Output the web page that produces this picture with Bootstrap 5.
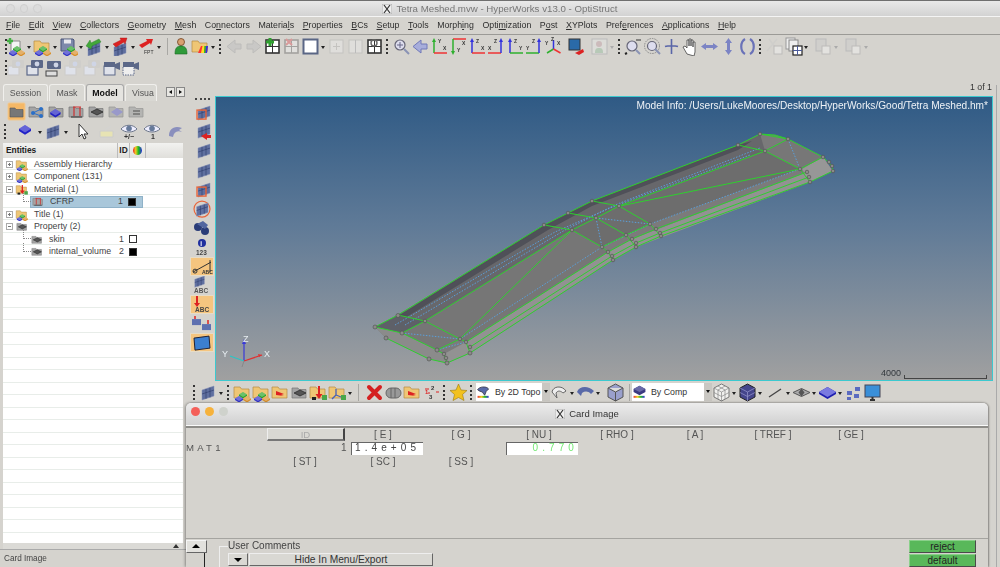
<!DOCTYPE html>
<html lang="en"><head><meta charset="utf-8"><title>HyperWorks</title>
<link href="https://cdn.jsdelivr.net/npm/bootstrap@5.3.0/dist/css/bootstrap.min.css" rel="stylesheet">
<style>
html,body{height:567px;overflow:hidden}
body{background:#d5d3ce;font-family:"Liberation Sans",Arial,sans-serif;font-size:8.8px;color:#2e2e2e;line-height:1.2;position:relative;width:1000px;filter:blur(.35px)}
.ttl{height:17px;background:linear-gradient(#e9e9e9,#d2d2d2);border-top:1px solid #6f6f6f;border-bottom:1px solid #f4f4f4;position:relative}
.ttl-t{font-size:9.7px;color:#777}
.xic{width:10px;height:10px;margin-right:4px}
.lig{width:8.5px;height:8.5px;border-radius:50%;background:#dcdcdc;border:1px solid #cfcfcf}
.menu{height:18px;border-bottom:1px solid #9b9a96;padding-left:6px;gap:8.55px;font-size:8.8px}
.tb{height:22px;padding-left:3px}
.tb2{height:21px}
.ic{width:19px;height:19px;flex:none;display:block}
.mgl2{margin-left:2px}
.grip{width:8px;height:17px;flex:none;position:relative}
.grip::after{content:"";position:absolute;left:2px;top:1px;height:15px;border-left:2px dotted #333}
.gh{display:block;height:2px;width:15px;margin:2px 0 3px 5px;border-top:2px dotted #444;flex:none}
.car{width:7px;height:19px;flex:none;position:relative}
.car::after{content:"";position:absolute;left:1px;top:9px;border:2.5px solid transparent;border-top:3px solid #222;border-bottom:0}
.car.off::after{border-top-color:#aaa}
.sepv{width:9px;height:17px;flex:none;position:relative}
.sepv::after{content:"";position:absolute;left:4px;top:0;height:17px;border-left:1px solid #a9a8a4}
.lft{width:186px;flex:none;height:489px}
.tabs{height:17px;margin-top:6px;padding-left:3px;gap:1px;border:0;position:relative}
.tabs .nav-link{padding:3px 0 0;height:17px;text-align:center;background:#d9d8d3;border:1px solid #f0efec;border-bottom:0;border-radius:3px 3px 0 0;color:#555;font-size:8.8px}
.tabs .nav-link.active{background:#e5e4e0;color:#111;font-weight:700;border-color:#aaa}
.tabs-arr{position:absolute;left:166px;top:3px;gap:1px}
.tabs-arr span{width:9px;height:10px;background:#e8e7e3;border:1px solid #888;position:relative;display:block}
.tabs-arr span::after{content:"";position:absolute;top:1.5px;left:2px;border:2.5px solid transparent}
.tabs-arr .tl::after{border-right:3px solid #111;border-left:0}
.tabs-arr .tr::after{border-left:3px solid #111;border-right:0}
.prow{height:20px;padding-left:7px;gap:1px}
.prow2{padding-left:2px;gap:0}
.tree{margin:2px 0 0 3px;width:180px;background:#fff;height:400px;position:relative}
.thd{height:15px;background:linear-gradient(#f2f2f0,#e0dfdb);font-weight:700;font-size:8.4px;color:#222;padding-left:3px}
.thd>span{border-right:1px solid #bbb;height:15px;line-height:15px}
.tbody{height:385px;background:repeating-linear-gradient(#fff 0 11.5px,#e8ede9 11.5px 12.5px)}
.trow{height:12.5px;position:relative;font-size:8.8px;color:#444}
.trin{height:12.5px;width:100%}
.lv1{padding-left:27px;width:140px}
.lv1::before{content:"";position:absolute;left:20px;top:-3px;height:9px;width:8px;border-left:1px dotted #888;border-bottom:1px dotted #888}
.trs{background:#a9c7da;border:1px solid #8fb2c8}
.exp{width:7px;height:7px;border:1px solid #aaa;margin:0 2px 0 3px;position:relative;flex:none;background:#fff}
.exp::before{content:"";position:absolute;left:1px;top:2px;width:3px;border-top:1px solid #777}
.exp.pl::after{content:"";position:absolute;left:2px;top:1px;height:3px;border-left:1px solid #777}
.tic{width:14px;height:13px;flex:none;display:block}
.nm{margin-left:5px;flex:1 1 auto;white-space:nowrap}
.idc{width:10px;text-align:right;flex:none}
.sw{width:8px;height:8px;border:1px solid #333;margin:0 6px 0 5px;flex:none;background:#000}
.sw.wh{background:#fff}
.sbar{height:6px;margin-left:3px;width:180px;background:#dbdad6;position:relative}
.sbar::after{content:"";position:absolute;left:170px;top:1px;border:3px solid transparent;border-bottom:4px solid #333;border-top:0}
.stat{height:18px;line-height:18px;padding-left:4px;border-top:1px solid #aaa;font-size:8.2px;color:#444}
.rgt{width:814px;flex:none}
.pg{height:18px;line-height:18px;text-align:right;padding-right:8px;font-size:8.8px;color:#333}
.vtb{width:29px;flex:none;padding-left:4px;height:285px}
.vbt{width:24px;height:19.2px;flex:none;display:block}
.vbt.sel2{background:#f5c57f;box-shadow:inset 0 0 0 1px #e7dcc6}
.vp{width:778px;height:285px;flex:none;position:relative;background:linear-gradient(#2f5a85,#5f7a97 45%,#a0a0a0);border:1px solid #3cc9cf}
.vp svg{position:absolute;left:0;top:0;width:100%;height:100%}
.minf{position:absolute;right:4px;top:3px;color:#eef2f6;font-size:10.14px;z-index:1}
.scb{position:absolute;right:5px;bottom:1px;color:#33383d;font-size:9px;z-index:1;gap:3px}
.scb i{display:block;width:83px;height:4px;border:1px solid #444;border-top:0}
.btb{height:22px;padding-left:5px}
.dd{height:18px;background:#fff;position:relative;flex:none;font-size:8.8px;color:#333}
.dd b{position:absolute;right:0;top:0;width:8px;height:18px;background:#c9c7c2}
.dd b::after{content:"";position:absolute;left:1.5px;top:7px;border:2.5px solid transparent;border-top:3px solid #111;border-bottom:0}
.cw{position:absolute;left:186px;top:403px;width:802px;height:164px;background:#d5d3ce;border-radius:5px 5px 0 0;box-shadow:-1px 0 3px rgba(0,0,0,.35),1px 0 2px rgba(0,0,0,.35);z-index:3}
.cwt{height:23px;border-radius:5px 5px 0 0;background:linear-gradient(#ececec,#d0d0d0);border-bottom:1px solid #fafafa;position:relative;font-size:9.5px;color:#333}
.dots{position:absolute;left:5px;top:4px;gap:5px}
.lg{width:9px;height:9px;border-radius:50%}
.cwl{border-top:2px solid #8d8c88}
.crow{height:13px;font-size:10px;color:#555;white-space:nowrap}
.cc{width:78px;text-align:center;flex:none}
.idb{width:78px;margin-left:81px;height:13px;line-height:11px;background:#d9d8d3;border:1px solid #eee;border-right:2px solid #444;border-bottom:2px solid #777;color:#aaa;padding:0;border-radius:0;font-size:9.6px}
.mt{width:155px;letter-spacing:3.2px;color:#555;font-size:9.6px}
.fld{width:72px;height:13px;background:#fff;border-top:1.5px solid #666;border-left:1.5px solid #666;flex:none;font-size:10px;letter-spacing:4.1px;line-height:10.5px;padding-left:3px;color:#444}
.fld.gr{color:#74e874;text-align:right;padding-right:0}
.cbot{position:absolute;left:0;right:0;top:135px;border-top:1px solid #a5a4a0;height:29px}
.upb{position:absolute;left:0;top:1px;width:21px;height:13px;background:#e2e1dd;border:1px solid #f5f5f5;border-right:1px solid #666;border-bottom:1px solid #666;padding:0;border-radius:0}
.upb::after{content:"";position:absolute;left:5px;top:3px;border:4px solid transparent;border-bottom:4px solid #000;border-top:0}
.upl{position:absolute;left:18px;top:14px;height:15px;border-right:1px solid #222;width:1px}
.uc{position:absolute;left:42px;top:1px;font-size:10px;color:#444}
.brk{position:absolute;left:33px;top:7px;width:9px;height:22px;border-left:1px solid #eee;border-top:1px solid #eee}
.hb{position:absolute;left:42px;top:14px;gap:1px}
.hb1,.hb2{height:13px;background:#d9d8d3;border:1px solid #eee;border-right:1px solid #666;border-bottom:1px solid #666;padding:0;border-radius:0;font-size:10.2px;line-height:11px;color:#333}
.hb1{width:20px;position:relative}
.hb1::after{content:"";position:absolute;left:5px;top:4px;border:4px solid transparent;border-top:4px solid #000;border-bottom:0}
.hb2{width:184px}
.gbtn{position:absolute;left:723px;width:67px;height:13px;padding:0;border-radius:0;background:#59b85a;border:1px solid #4a4a4a;border-top-color:#8ad08a;border-left-color:#8ad08a;color:#222;font-size:10px;line-height:11px}
.rlin{position:absolute;left:996px;top:85px;height:482px;border-left:1px solid #aaa;z-index:2}
</style></head>
<body>
<svg width="0" height="0" class="position-absolute"><defs>
<g id="dia"><path d="M0 2.5 4 0l4 2.5V4L4 6.5 0 4z"/><path d="M0 2.5 4 0l4 2.5L4 5z" fill="#fff" opacity=".3"/></g>
<path id="fld" d="M1 4h6l1.5 2H16v9H1z" fill="#efc675" stroke="#b68a42" stroke-width=".7"/>
<g id="cbs"><use href="#dia" x="6" y="8" fill="#2ca52c"/><use href="#dia" x="2" y="12" fill="#3434c8"/><use href="#dia" x="10" y="12" fill="#d8902c"/></g>
<g id="win"><rect x="3" y="3" width="13" height="13" fill="#fff" stroke="#333" stroke-width="1.6"/><path d="M9.5 3v13M3 9.5h13" stroke="#333"/></g>
<g id="wall"><path d="M3 7l12-4v10L3 17z" fill="#5f6f9f" stroke="#8a94b8" stroke-width=".5"/><path d="M7 6v10M11 4.5v10M3 11l12-4" stroke="#2d3a6a" stroke-width=".6"/></g>
<symbol id="new" viewBox="0 0 19 19"><path d="M4 4h9v12H4z" fill="#f4f4f4" stroke="#888"/><path d="M3 1v6M0 4h6" stroke="#45b045" stroke-width="2.4"/><use href="#cbs" y="1"/></symbol>
<symbol id="opn" viewBox="0 0 19 19"><use href="#fld"/><use href="#cbs" y="1"/></symbol>
<symbol id="sav" viewBox="0 0 19 19"><path d="M2 2h12l1 1v11H2z" fill="#7d89ab" stroke="#4a5578"/><rect x="5" y="2.500" width="7" height="4" fill="#e8e8ee"/><use href="#cbs" x="2" y="1"/></symbol>
<symbol id="imp" viewBox="0 0 19 19"><use href="#wall" y="2"/><path d="M1 9l5 3 1-3 9-4-2-3-8 4-1-3z" fill="#42a83a" stroke="#2a7a2a" stroke-width=".4"/></symbol>
<symbol id="exp" viewBox="0 0 19 19"><use href="#wall" y="3"/><path d="M2 7l8-4-1-2h7l-2 6-1-2-8 5z" fill="#d22" stroke="#a11" stroke-width=".4"/></symbol>
<symbol id="fpt" viewBox="0 0 19 19"><path d="M2 8l8-4-1-2h7l-2 6-1-2-8 5z" fill="#d22"/><text x="7" y="17" font-size="5" fill="#333" font-family="Liberation Sans">FPT</text></symbol>
<symbol id="usr" viewBox="0 0 19 19"><circle cx="9" cy="5" r="3.5" fill="#d8a070" stroke="#704020" stroke-width=".8"/><path d="M3 17c0-6 2-8 6-8s6 2 6 8z" fill="#2f9a3a" stroke="#1a6a22" stroke-width=".6"/></symbol>
<symbol id="rnb" viewBox="0 0 19 19"><use href="#fld"/><path d="M7 16l3-7h7l-1 7z" fill="#f33"/><path d="M10 16l1.500-7h2L13 16z" fill="#fd2"/><path d="M13 16l.5-7H15l-.5 7z" fill="#2c2"/><path d="M14.500 16l.5-7h2l-1 7z" fill="#33d"/></symbol>
<symbol id="al" viewBox="0 0 19 19"><path d="M2 9.500 10 3v4h6v5h-6v4z" fill="#c9c8c6" stroke="#bdbcba"/></symbol>
<symbol id="ar" viewBox="0 0 19 19"><path d="M17 9.500 9 3v4H3v5h6v4z" fill="#c9c8c6" stroke="#bdbcba"/></symbol>
<symbol id="gp" viewBox="0 0 19 19"><use href="#win"/><path d="M7 1v8M3 5h8" stroke="#2fa02f" stroke-width="3"/></symbol>
<symbol id="gx" viewBox="0 0 19 19"><g opacity=".3"><use href="#win"/></g><path d="M4 2l6 6M10 2 4 8" stroke="#d89a9a" stroke-width="2"/></symbol>
<symbol id="sq" viewBox="0 0 19 19"><rect x="2.500" y="2.500" width="14" height="14" fill="#fff" stroke="#5a6685" stroke-width="2"/></symbol>
<symbol id="d1" viewBox="0 0 19 19"><rect x="3" y="3" width="13" height="13" fill="#dfdedb" stroke="#c4c3c0"/><path d="M9.500 6v7M6 9.500h7" stroke="#c4c3c0"/></symbol>
<symbol id="d2" viewBox="0 0 19 19"><rect x="3" y="3" width="13" height="13" fill="#dfdedb" stroke="#c4c3c0"/><path d="M9.500 3v13" stroke="#bbb"/></symbol>
<symbol id="wt" viewBox="0 0 19 19"><use href="#win"/><circle cx="9" cy="6" r="3" fill="none" stroke="#666" stroke-width="1.400"/></symbol>
<symbol id="mag" viewBox="0 0 19 19"><circle cx="8" cy="8" r="5" fill="#dde" stroke="#667" stroke-width="1.200"/><path d="M8 5v6M5 8h6" stroke="#668"/><path d="M12 12l5 5" stroke="#8a93b5" stroke-width="2"/></symbol>
<symbol id="bl" viewBox="0 0 19 19"><path d="M2 9.500 10 3v4h6v5h-6v4z" fill="#a7addb" stroke="#7078b8"/></symbol>
<symbol id="a1" viewBox="0 0 19 19"><path d="M4 16V3" stroke="#2eb02e" stroke-width="1.500"/><path d="M4 1 2 5h4z" fill="#2eb02e"/><path d="M4 16h13" stroke="#e33" stroke-width="1.500"/><text x="8" y="6" font-size="5" font-weight="700" fill="#333">Y</text><text x="13" y="13" font-size="5" font-weight="700" fill="#333">X</text></symbol>
<symbol id="a2" viewBox="0 0 19 19"><path d="M4 2h13" stroke="#e33" stroke-width="1.500"/><path d="M4 2v13" stroke="#2eb02e" stroke-width="1.500"/><path d="M4 18l-2-4h4z" fill="#2eb02e"/><text x="8" y="15" font-size="5" font-weight="700" fill="#333">Y</text><text x="13" y="8" font-size="5" font-weight="700" fill="#333">X</text></symbol>
<symbol id="a3" viewBox="0 0 19 19"><path d="M4 16V3" stroke="#33d" stroke-width="1.500"/><path d="M4 1 2 5h4z" fill="#33d"/><path d="M4 16h13" stroke="#e33" stroke-width="1.500"/><text x="8" y="6" font-size="5" font-weight="700" fill="#333">Z</text><text x="13" y="13" font-size="5" font-weight="700" fill="#333">X</text></symbol>
<symbol id="a4" viewBox="0 0 19 19"><path d="M1 16h13" stroke="#e33" stroke-width="1.500"/><path d="M14 16V3" stroke="#33d" stroke-width="1.500"/><path d="M14 1l-2 4h4z" fill="#33d"/><text x="7" y="6" font-size="5" font-weight="700" fill="#333">Z</text><text x="1" y="13" font-size="5" font-weight="700" fill="#333">X</text></symbol>
<symbol id="a5" viewBox="0 0 19 19"><path d="M4 16V3" stroke="#33d" stroke-width="1.500"/><path d="M4 1 2 5h4z" fill="#33d"/><path d="M4 16h13" stroke="#2eb02e" stroke-width="1.500"/><text x="8" y="6" font-size="5" font-weight="700" fill="#333">Z</text><text x="13" y="13" font-size="5" font-weight="700" fill="#333">Y</text></symbol>
<symbol id="a6" viewBox="0 0 19 19"><path d="M1 16h13" stroke="#2eb02e" stroke-width="1.500"/><path d="M14 16V3" stroke="#33d" stroke-width="1.500"/><path d="M14 1l-2 4h4z" fill="#33d"/><text x="7" y="6" font-size="5" font-weight="700" fill="#333">Z</text><text x="1" y="13" font-size="5" font-weight="700" fill="#333">Y</text></symbol>
<symbol id="a7" viewBox="0 0 19 19"><path d="M9.500 12V3" stroke="#33d" stroke-width="1.500"/><path d="M9.500 12 3 16" stroke="#2eb02e" stroke-width="1.500"/><path d="M9.500 12l7 4" stroke="#e33" stroke-width="1.500"/><text x="1" y="8" font-size="5" font-weight="700" fill="#333">Y</text><text x="7" y="4" font-size="5" font-weight="700" fill="#333">Z</text><text x="13" y="8" font-size="5" font-weight="700" fill="#333">X</text></symbol>
<symbol id="mon" viewBox="0 0 19 19"><rect x="2" y="2" width="11" height="11" fill="#2a6aa8" stroke="#333"/><path d="M8 16l8-4 1 3-5 3z" fill="#d22"/></symbol>
<symbol id="gus" viewBox="0 0 19 19"><rect x="2" y="2" width="15" height="15" fill="#dcdcd8" stroke="#bbb"/><circle cx="9" cy="7" r="3" fill="#cbb"/><path d="M5 16c0-4 1-5 4-5s4 1 4 5z" fill="#b7c9b7"/></symbol>
<symbol id="zm" viewBox="0 0 19 19"><circle cx="8" cy="9" r="5" fill="#dde" stroke="#667" stroke-width="1.200"/><path d="M12 13l4 4" stroke="#8a93b5" stroke-width="2"/><path d="M12 3h5" stroke="#333"/><path d="M1 17l2-1" stroke="#222" stroke-width="2"/></symbol>
<symbol id="zc" viewBox="0 0 19 19"><circle cx="9" cy="9" r="7.500" fill="none" stroke="#888" stroke-dasharray="1.500 1"/><circle cx="9" cy="9" r="4.500" fill="#dde" stroke="#667" stroke-width="1.200"/><path d="M12 12l5 5" stroke="#8a93b5" stroke-width="2"/></symbol>
<symbol id="xh" viewBox="0 0 19 19"><path d="M9.500 2v15M3 9.500c3-1 10-1 13 0" stroke="#5a66a8" stroke-width="1.600" fill="none"/></symbol>
<symbol id="hnd" viewBox="0 0 19 19"><path d="M6 17 2 10l2-1 2 2V3h2v6-7h2v7-6h2v7-5h2v10l-1 4z" fill="#fff" stroke="#444" stroke-width=".8"/></symbol>
<symbol id="hh" viewBox="0 0 19 19"><path d="M1 9.500 6 6v2h7V6l5 3.500L13 13v-2H6v2z" fill="#7c84c4"/></symbol>
<symbol id="vv" viewBox="0 0 19 19"><path d="M9.500 1 13 6h-2v7h2l-3.500 5L6 13h2V6H6z" fill="#7c84c4"/></symbol>
<symbol id="rot" viewBox="0 0 19 19"><path d="M7 2C2 5 2 14 7 17M12 2c5 3 5 12 0 15" fill="none" stroke="#6a72b8" stroke-width="2.200"/></symbol>
<symbol id="cut" viewBox="0 0 19 19"><path d="M2 14 12 2M4 2l9 12" stroke="#cfcecb" stroke-width="1.500"/><rect x="9" y="9" width="8" height="8" fill="#e3e2df" stroke="#bdbcba"/></symbol>
<symbol id="pst" viewBox="0 0 19 19"><rect x="2" y="1" width="9" height="11" fill="#eee" stroke="#999"/><rect x="5" y="3" width="9" height="11" fill="#eee" stroke="#888"/><rect x="9" y="9" width="9" height="9" fill="#fff" stroke="#222" stroke-width="1.200"/><path d="M13.500 9v9M9 13.500h9" stroke="#4a5a9a"/></symbol>
<symbol id="pd" viewBox="0 0 19 19"><rect x="2" y="2" width="10" height="12" fill="#d0cfcc" stroke="#bbb"/><rect x="8" y="9" width="8" height="8" fill="#e3e2df" stroke="#bdbcba"/></symbol>
<g id="cam"><rect x="1" y="8" width="11" height="9" fill="#dfe2ea" stroke="currentColor" stroke-width="1.200"/><rect x="5" y="2" width="12" height="8" rx="1" fill="currentColor"/><circle cx="11" cy="6" r="2.400" fill="#cfd5e6"/></g>
<symbol id="c0" viewBox="0 0 19 19"><g color="#cfcecb"><use href="#cam"/></g></symbol>
<symbol id="c1" viewBox="0 0 19 19"><g color="#5c6888"><use href="#cam"/></g></symbol>
<symbol id="c2" viewBox="0 0 19 19"><g color="#5c6888"><rect x="1" y="13" width="11" height="5" fill="#ddd" stroke="#444"/><rect x="2" y="3" width="14" height="8" rx="1" fill="currentColor"/><circle cx="11" cy="7" r="2.400" fill="#cfd5e6"/></g></symbol>
<symbol id="c3" viewBox="0 0 19 19"><g color="#5c6888"><rect x="2" y="8" width="11" height="9" fill="#dfe2ea" stroke="currentColor"/><rect x="2" y="4" width="11" height="5" fill="currentColor"/><path d="M13 6l5-2v8l-5-2z" fill="currentColor"/></g></symbol>
<symbol id="c4" viewBox="0 0 19 19"><g color="#5c6888"><rect x="2" y="8" width="11" height="9" fill="#eee" stroke="currentColor" stroke-dasharray="1.500 1"/><rect x="2" y="4" width="11" height="5" fill="currentColor"/><path d="M13 6l5-2v8l-5-2z" fill="currentColor"/></g></symbol>
<symbol id="p1" viewBox="0 0 19 19"><rect x="1" y="1" width="17" height="17" rx="1" fill="#f5b866" stroke="#f0c890"/><path d="M3 6h5l1 1.500h7V15H3z" fill="#777" stroke="#555" stroke-width=".6"/></symbol>
<g id="pf"><path d="M2 5h6l1 1.500h7V15H2z" fill="#a4a4a4" stroke="#777" stroke-width=".7"/></g>
<symbol id="p2" viewBox="0 0 19 19"><use href="#pf"/><circle cx="6" cy="11" r="2" fill="#2a6fc8"/><circle cx="14" cy="7" r="2" fill="#2a6fc8"/><circle cx="14" cy="14" r="2" fill="#2a6fc8"/><path d="M6 11l8-4M6 11l8 3" stroke="#2a6fc8"/></symbol>
<symbol id="p3" viewBox="0 0 19 19"><use href="#pf"/><use href="#dia" x="4" y="7" fill="#2222c0" transform="translate(-2 -2) scale(1.300)"/></symbol>
<g id="mtl"><path d="M4 5h8M5 5v9M11 5v9" stroke="#c33" fill="none" stroke-width="1.200"/><path d="M2 15h11" stroke="#333"/></g>
<symbol id="p4" viewBox="0 0 19 19"><use href="#pf"/><use href="#mtl" x="2" y="0"/></symbol>
<symbol id="p5" viewBox="0 0 19 19"><use href="#pf"/><path d="M4 10l6-3 6 3-6 3z" fill="#555" stroke="#222" stroke-width=".7"/></symbol>
<symbol id="p6" viewBox="0 0 19 19"><g opacity=".65"><use href="#pf"/><path d="M4 10l6-4 6 4-6 4z" fill="#7a7ac8"/></g></symbol>
<symbol id="p7" viewBox="0 0 19 19"><g opacity=".65"><use href="#pf"/><path d="M6 8h7v2H6zM6 11h7v2H6z" fill="#555"/></g></symbol>
<symbol id="bdi" viewBox="0 0 19 19"><use href="#dia" x="2" y="4" fill="#2222c8" transform="translate(-2 -3) scale(1.500)"/></symbol>
<symbol id="wl" viewBox="0 0 19 19"><use href="#wall"/></symbol>
<symbol id="cur" viewBox="0 0 19 19"><path d="M5 2v13l3-3 2 5 2-1-2-4h4z" fill="#fff" stroke="#333"/></symbol>
<symbol id="tag" viewBox="0 0 19 19"><path d="M3 9h13v6H3z" fill="#e7e3b4" stroke="#ccc"/><path d="M8 8l6-4" stroke="#d4d3d0" stroke-width="2"/></symbol>
<g id="eye"><path d="M1 7c4-5 12-5 16 0-4 4-12 4-16 0z" fill="#eef" stroke="#6a7488"/><circle cx="9" cy="6.500" r="2.800" fill="#677a9a"/></g>
<symbol id="e1" viewBox="0 0 19 19"><use href="#eye"/><text x="4" y="17" font-size="7" font-weight="700" fill="#333">+/−</text></symbol>
<symbol id="e2" viewBox="0 0 19 19"><use href="#eye"/><text x="8" y="17" font-size="7" font-weight="700" fill="#333">1</text></symbol>
<symbol id="ua" viewBox="0 0 19 19"><path d="M3 14C3 7 8 3 16 6l-3 2 3 2c-5-2-8 0-9 5z" fill="#8a8fbd"/></symbol>
<symbol id="v1" viewBox="0 0 24 19"><use href="#wall" x="5"/><rect x="7" y="7" width="9" height="9" fill="none" stroke="#e8663c" stroke-width="1.400"/></symbol>
<symbol id="v2" viewBox="0 0 24 19"><use href="#wall" x="5" y="-1"/><path d="M11 14l6-3v2h4v3h-4v2z" fill="#d22"/></symbol>
<symbol id="v3" viewBox="0 0 24 19"><use href="#wall" x="5"/></symbol>
<symbol id="v4" viewBox="0 0 24 19"><circle cx="12" cy="10" r="8" fill="none" stroke="#e8663c" stroke-width="1.200"/><use href="#wall" x="4" y="1" transform="scale(.95)"/></symbol>
<symbol id="v5" viewBox="0 0 24 19"><circle cx="8" cy="9" r="4" fill="#2a3c78"/><circle cx="15" cy="13" r="4" fill="#2a3c78"/><path d="M7 6l6-3 5 4-3 4z" fill="#5266a0"/></symbol>
<symbol id="v6" viewBox="0 0 24 19"><circle cx="12" cy="6" r="4" fill="#1f2f9f"/><text x="10.300" y="8.500" font-size="6.500" font-weight="700" fill="#fff">i</text><text x="6" y="18" font-size="6.500" font-weight="700" fill="#444">123</text></symbol>
<symbol id="v7" viewBox="0 0 24 19"><path d="M3 15 21 5" stroke="#333"/><circle cx="5" cy="14" r="2" fill="none" stroke="#333"/><path d="M20 3v12" stroke="#333"/><text x="12" y="17" font-size="5" fill="#333" font-weight="700">ABC</text></symbol>
<symbol id="v8" viewBox="0 0 24 19"><use href="#wall" x="3" y="-3" transform="scale(.8)"/><text x="4" y="17" font-size="6.500" font-weight="700" fill="#555">ABC</text></symbol>
<symbol id="v9" viewBox="0 0 24 19"><path d="M7 1v9" stroke="#d22" stroke-width="2"/><path d="M7 12 4 8h6z" fill="#d22"/><text x="5" y="17" font-size="6.500" font-weight="700" fill="#444">ABC</text></symbol>
<symbol id="v10" viewBox="0 0 24 19"><rect x="2" y="5" width="9" height="6" fill="#5e70b0"/><rect x="12" y="10" width="9" height="6" fill="#5e70b0"/><path d="M5 2v3M18 6v4" stroke="#d22" stroke-width="1.500"/></symbol>
<symbol id="v11" viewBox="0 0 24 19"><path d="M4 5l15-2 1 12-15 2z" fill="#3c7fd0" stroke="#223"/></symbol>
<symbol id="b1" viewBox="0 0 19 19"><use href="#wall"/></symbol>
<symbol id="r1" viewBox="0 0 19 19"><use href="#fld"/><path d="M10 3v11" stroke="#d22" stroke-width="2"/><path d="M10 16 6.500 11h7z" fill="#d22"/><rect x="13" y="12" width="5" height="5" fill="#4aa64a"/><rect x="3" y="14" width="4" height="3" fill="#222"/></symbol>
<symbol id="r2" viewBox="0 0 19 19"><use href="#fld"/><path d="M8 12l-4 4M8 12l5 2M8 12V6" stroke="#4660b8" stroke-width="1.300"/><rect x="13" y="12" width="5" height="5" fill="#4aa64a"/></symbol>
<symbol id="rx" viewBox="0 0 19 19"><path d="M4 4l11 11M15 4 4 15" stroke="#d42020" stroke-width="4" stroke-linecap="round"/></symbol>
<symbol id="gea" viewBox="0 0 19 19"><rect x="2" y="5" width="15" height="10" rx="5" fill="#999" stroke="#666"/><path d="M7 5v10M11 5v10" stroke="#666"/></symbol>
<symbol id="mf" viewBox="0 0 19 19"><use href="#fld"/><path d="M5 8l8 3-3 1 3 1-8-1z" fill="#d22"/></symbol>
<symbol id="num" viewBox="0 0 19 19"><text x="9" y="7" font-size="6" font-weight="700" fill="#333">2</text><text x="7" y="16" font-size="6" font-weight="700" fill="#333">3</text><path d="M3 6h4M6 10h2" stroke="#d22"/><text x="3" y="11" font-size="6" font-weight="700" fill="#d22">1</text><path d="M14 9h3" stroke="#d22"/></symbol>
<symbol id="str" viewBox="0 0 19 19"><path d="M9.500 1l2.500 6 6 .5-4.500 4 1.500 6-5.500-3-5.500 3 1.500-6L1 7.500 7 7z" fill="#f2c11e" stroke="#9a7a10" stroke-width=".6"/></symbol>
<symbol id="top" viewBox="0 0 19 19"><path d="M2 6c2-4 11-5 14-1l-3 3-2 5-3-4c-2-1-4-1-6-3z" fill="#5a6aa8" stroke="#334"/><path d="M2 15h14" stroke="url(#rb)" stroke-width="2.500"/></symbol>
<linearGradient id="rb" gradientUnits="userSpaceOnUse" x1="2" x2="16" y1="0" y2="0"><stop offset="0" stop-color="#e33"/><stop offset=".35" stop-color="#ec2"/><stop offset=".65" stop-color="#2b2"/><stop offset="1" stop-color="#33d"/></linearGradient>
<symbol id="cbb" viewBox="0 0 19 19"><path d="M9.500 1 17 5v4l-7.500 4L2 9V5z" fill="#3a3a80"/><path d="M9.500 1 17 5l-7.500 4L2 5z" fill="#6a6aa8"/><path d="M2 15h14" stroke="url(#rb)" stroke-width="2.500"/></symbol>
<symbol id="cv" viewBox="0 0 19 19"><path d="M2 9C3 3 12 2 16 8l-3 2c-2-2-5-3-7 0l1 5z" fill="#eee" stroke="#666"/></symbol>
<symbol id="cw2" viewBox="0 0 19 19"><path d="M1 9C3 3 12 2 18 8l-3 3c-3-3-6-3-9-1l-1 3z" fill="#5a6aa8"/></symbol>
<symbol id="bx" viewBox="0 0 19 19"><path d="M9.500 1 17 5v9l-7.500 4L2 14V5z" fill="#9aa0cc" stroke="#555"/><path d="M2 5l7.500 4L17 5M9.500 9v9" stroke="#555" fill="#ddd"/></symbol>
<symbol id="wc" viewBox="0 0 19 19"><path d="M9.500 1 17 5v9l-7.500 4L2 14V5z" fill="#f0f0ee" stroke="#777"/><path d="M2 5l7.500 4L17 5M9.500 9v9M2 9.500l7.500 4 7.500-4M6 3l7 4v9M13 3 6 7v9" stroke="#888" fill="none" stroke-width=".7"/></symbol>
<symbol id="sc" viewBox="0 0 19 19"><path d="M9.500 1 17 5v9l-7.500 4L2 14V5z" fill="#45458c" stroke="#222"/><path d="M2 5l7.500 4L17 5M9.500 9v9M2 9.500l7.500 4 7.500-4" stroke="#9a9ad0" fill="none" stroke-width=".7"/></symbol>
<symbol id="ln" viewBox="0 0 19 19"><path d="M3 14 15 6" stroke="#444" stroke-width="1.300"/></symbol>
<symbol id="dg" viewBox="0 0 19 19"><path d="M1 9.500l8.500-4 8.500 4-8.500 4z" fill="#aaa" stroke="#555"/><path d="M9.500 5.500l-3 4 3 4 3-4z" fill="#555"/></symbol>
<symbol id="db" viewBox="0 0 19 19"><path d="M1 9l8.500-5L18 9v2l-8.500 5L1 11z" fill="#1f1fb0"/><path d="M1 9l8.500-5L18 9l-8.500 5z" fill="#7a7ae0"/></symbol>
<symbol id="sq4" viewBox="0 0 19 19"><path d="M3 8h5v4H3zM11 4h5v4h-5zM3 14h4v3H3zM10 11h5v4h-5z" fill="#5a6ac0"/></symbol>
<symbol id="scr" viewBox="0 0 19 19"><rect x="2" y="2" width="15" height="12" fill="#3a8fd8" stroke="#445"/><path d="M7 17h5M9.500 14v3" stroke="#333" stroke-width="2"/></symbol>
</defs></svg>

<div class="ttl d-flex align-items-center justify-content-center">
<div class="d-flex position-absolute" style="left:6px;top:3px;gap:5px"><span class="lig"></span><span class="lig"></span><span class="lig"></span></div>
<svg class="xic" viewBox="0 0 10 10"><rect width="10" height="10" fill="#eee" stroke="#aaa"/><path d="M2 1l6 8M8 1 2 9" stroke="#333" stroke-width="1.200"/></svg><span class="ttl-t">Tetra Meshed.mvw - HyperWorks v13.0 - OptiStruct</span></div>

<nav class="menu d-flex align-items-center">
<span><u>F</u>ile</span><span><u>E</u>dit</span><span><u>V</u>iew</span><span><u>C</u>ollectors</span><span><u>G</u>eometry</span><span><u>M</u>esh</span><span>Co<u>n</u>nectors</span><span>Materia<u>l</u>s</span><span><u>P</u>roperties</span><span><u>B</u>Cs</span><span><u>S</u>etup</span><span><u>T</u>ools</span><span>Morph<u>i</u>ng</span><span>Opti<u>m</u>ization</span><span>P<u>o</u>st</span><span><u>X</u>YPlots</span><span>Pref<u>e</u>rences</span><span><u>A</u>pplications</span><span><u>H</u>elp</span>
</nav>

<div class="tb d-flex align-items-center"><i class="grip" style="width:4px"></i><svg class="ic"><use href="#new"/></svg><i class="car"></i><svg class="ic"><use href="#opn"/></svg><i class="car"></i><svg class="ic"><use href="#sav"/></svg><i class="car"></i><svg class="ic"><use href="#imp"/></svg><i class="car"></i><svg class="ic"><use href="#exp"/></svg><i class="car"></i><svg class="ic"><use href="#fpt"/></svg><i class="car"></i><i class="sepv"></i><svg class="ic"><use href="#usr"/></svg><svg class="ic"><use href="#rnb"/></svg><i class="car"></i><i class="grip"></i><svg class="ic"><use href="#al"/></svg><svg class="ic"><use href="#ar"/></svg><svg class="ic"><use href="#gp"/></svg><svg class="ic"><use href="#gx"/></svg><svg class="ic"><use href="#sq"/></svg><i class="car"></i><svg class="ic"><use href="#d1"/></svg><svg class="ic"><use href="#d2"/></svg><svg class="ic"><use href="#wt"/></svg><i class="grip"></i><svg class="ic"><use href="#mag"/></svg><svg class="ic"><use href="#bl"/></svg><svg class="ic"><use href="#a1"/></svg><svg class="ic"><use href="#a2"/></svg><svg class="ic"><use href="#a3"/></svg><svg class="ic"><use href="#a4"/></svg><svg class="ic"><use href="#a5"/></svg><svg class="ic"><use href="#a6"/></svg><svg class="ic"><use href="#a7"/></svg><svg class="ic ms-1"><use href="#mon"/></svg><svg class="ic ms-1"><use href="#gus"/></svg><i class="car off"></i><i class="grip"></i><svg class="ic"><use href="#zm"/></svg><svg class="ic"><use href="#zc"/></svg><svg class="ic"><use href="#xh"/></svg><svg class="ic"><use href="#hnd"/></svg><svg class="ic"><use href="#hh"/></svg><svg class="ic"><use href="#vv"/></svg><svg class="ic"><use href="#rot"/></svg><i class="grip"></i><svg class="ic"><use href="#cut"/></svg><svg class="ic"><use href="#pst"/></svg><i class="car"></i><svg class="ic ms-1"><use href="#pd"/></svg><i class="car off"></i><svg class="ic ms-1"><use href="#pd"/></svg><i class="car off"></i></div>

<div class="tb tb2 d-flex align-items-center"><i class="grip" style="width:4px"></i><svg class="ic"><use href="#c0"/></svg><svg class="ic"><use href="#c1"/></svg><svg class="ic"><use href="#c2"/></svg><svg class="ic"><use href="#c0"/></svg><svg class="ic"><use href="#c0"/></svg><svg class="ic"><use href="#c3"/></svg><svg class="ic"><use href="#c4"/></svg></div>

<div class="d-flex">
<aside class="lft">
<ul class="nav nav-tabs tabs">
<li class="nav-item"><a class="nav-link" style="width:45px">Session</a></li>
<li class="nav-item"><a class="nav-link" style="width:36px">Mask</a></li>
<li class="nav-item"><a class="nav-link active" style="width:38px">Model</a></li>
<li class="nav-item"><a class="nav-link" style="width:32px;overflow:hidden;text-align:left;padding-left:6px">Visua</a></li>
<li class="tabs-arr d-flex"><span class="tl"></span><span class="tr"></span></li>
</ul>
<div class="prow d-flex align-items-center"><svg class="ic"><use href="#p1"/></svg><svg class="ic"><use href="#p2"/></svg><svg class="ic"><use href="#p3"/></svg><svg class="ic"><use href="#p4"/></svg><svg class="ic"><use href="#p5"/></svg><svg class="ic"><use href="#p6"/></svg><svg class="ic"><use href="#p7"/></svg></div>
<div class="prow prow2 d-flex align-items-center"><i class="grip" style="width:16px"></i><svg class="ic"><use href="#bdi"/></svg><i class="car"></i><svg class="ic"><use href="#wl"/></svg><i class="car"></i><svg class="ic ms-1"><use href="#cur"/></svg><svg class="ic ms-1"><use href="#tag"/></svg><svg class="ic ms-1"><use href="#e1"/></svg><svg class="ic ms-1"><use href="#e2"/></svg><svg class="ic ms-1"><use href="#ua"/></svg></div>
<div class="tree">
<div class="thd d-flex"><span style="width:112px">Entities</span><span class="text-center" style="width:12px">ID</span><span class="d-flex align-items-center justify-content-center" style="width:16px"><svg width="9" height="9" viewBox="0 0 9 9"><defs><linearGradient id="cg" x1="0" x2="1"><stop offset="0" stop-color="#e22"/><stop offset=".3" stop-color="#ec2"/><stop offset=".6" stop-color="#2b2"/><stop offset="1" stop-color="#22d"/></linearGradient></defs><circle cx="4.500" cy="4.500" r="4.500" fill="url(#cg)"/></svg></span></div>
<div class="tbody">
<div class="trow d-flex align-items-center"><i class="exp pl"></i><svg class="tic"><use href="#opn"/></svg><span class="nm">Assembly Hierarchy</span></div>
<div class="trow d-flex align-items-center"><i class="exp pl"></i><svg class="tic"><use href="#opn"/></svg><span class="nm">Component (131)</span></div>
<div class="trow d-flex align-items-center"><i class="exp"></i><svg class="tic"><use href="#r1"/></svg><span class="nm">Material (1)</span></div>
<div class="trow lv1"><div class="trin trs d-flex align-items-center"><svg class="tic"><use href="#p4"/></svg><span class="nm">CFRP</span><span class="idc">1</span><i class="sw"></i></div></div>
<div class="trow d-flex align-items-center"><i class="exp pl"></i><svg class="tic"><use href="#opn"/></svg><span class="nm">Title (1)</span></div>
<div class="trow d-flex align-items-center"><i class="exp"></i><svg class="tic"><use href="#p5"/></svg><span class="nm">Property (2)</span></div>
<div class="trow lv1"><div class="trin d-flex align-items-center"><svg class="tic"><use href="#p5"/></svg><span class="nm">skin</span><span class="idc">1</span><i class="sw wh"></i></div></div>
<div class="trow lv1"><div class="trin d-flex align-items-center"><svg class="tic"><use href="#p5"/></svg><span class="nm">internal_volume</span><span class="idc">2</span><i class="sw"></i></div></div>
</div></div>
<div class="sbar"></div>
<div class="stat">Card Image</div>
</aside>
<main class="rgt">
<div class="pg">1 of 1</div>
<div class="d-flex">
<div class="vtb d-flex flex-column"><i class="gh"></i><svg class="vbt"><use href="#v1"/></svg><svg class="vbt"><use href="#v2"/></svg><svg class="vbt"><use href="#v3"/></svg><svg class="vbt"><use href="#v3"/></svg><svg class="vbt"><use href="#v1"/></svg><svg class="vbt"><use href="#v4"/></svg><svg class="vbt"><use href="#v5"/></svg><svg class="vbt"><use href="#v6"/></svg><svg class="vbt sel2"><use href="#v7"/></svg><svg class="vbt"><use href="#v8"/></svg><svg class="vbt sel2"><use href="#v9"/></svg><svg class="vbt"><use href="#v10"/></svg><svg class="vbt sel2"><use href="#v11"/></svg></div>
<div class="vp">
<div class="minf">Model Info: /Users/LukeMoores/Desktop/HyperWorks/Good/Tetra Meshed.hm*</div>
<svg viewBox="216 97 776 283">
<path d="M375 327 398 315 544 225 568 213 592 201 738 145 760 134 775 135 788 139 823 157 833 171 810 182 660 236 636 247 613 260 470 353 447 363 429 359 386 338z" fill="#7b7b7b"/>
<path d="M398 315 544 225 592 201 738 145 760 134 765 151 619 206 572 230 425 321z" fill="#67676b"/>
<path d="M398 316 544 225 592 201 738 145 752 141 738 150 592 206 548 230 405 318z" fill="#4f5058"/>
<path d="M375 327 398 315 425 321 402 333z" fill="#5e6068"/>
<path d="M386 338 375 327 402 333 437 350 444 354 447 363 429 359z" fill="#8b8b8b"/>
<path d="M437 350 460 339 466 342 608 252 602 247 572 230 425 321 402 333z" fill="#767676"/>
<path d="M466 342 470 353 447 363 444 354zM466 342 608 252 613 260 470 353zM608 252 632 239 636 247 613 260zM632 239 807 172 810 182 636 247z" fill="#929292"/>
<path d="M602 247 626 235 650 224 800 169 765 151 619 206 572 230z" fill="#6d6d6d"/>
<path d="M765 151 788 139 823 157 800 169z" fill="#777"/>
<path d="M802 169 823 157 833 171 810 182z" fill="#979797"/>
<g fill="none" stroke="#5aa0dc" stroke-width="1" stroke-dasharray="1.500 1.500">
<path d="M395 325 555 232 610 208 750 155"/><path d="M405 325 565 230 615 205 760 148"/><path d="M402 333 460 339 602 247 650 224 800 169"/><path d="M596 218 602 247M596 218 650 224M788 139 800 169M437 350 466 342"/></g>
<g fill="none" stroke="#2ed02e" stroke-width="1">
<path d="M375 327 398 315 544 225 568 213 592 201 738 145 760 134 775 135 788 139 823 157 829 163 832 166 833 171 810 182"/>
<path d="M398 315 425 321 402 333 437 350 460 339 425 321 572 230 596 218 619 206 765 151 738 145"/>
<path d="M544 225 572 230 602 247 626 235 650 224M568 213 596 218 626 235M592 201 619 206 650 224 661 236M760 134 788 139 765 151 800 169 823 157"/>
<path d="M460 339 572 230M620 206 800 169M375 327 402 333M386 338 429 359 447 363 470 353 466 342 460 339M437 350 444 354 447 363"/>
<path d="M466 342 608 252 632 239 656 229 807 172M470 347 612 256 636 243 660 233 809 177M470 353 613 260 636 247 661 236 810 182M602 247 608 252 613 260M626 235 636 247M800 169 810 182"/>
</g>
<g fill="#8b8b88" stroke="#4d4d4d" stroke-width=".6">
<circle cx="375" cy="327" r="2"/><circle cx="398" cy="315.500" r="2"/><circle cx="425" cy="321" r="1.800"/><circle cx="402" cy="333" r="2"/><circle cx="386" cy="338" r="2"/><circle cx="437" cy="350" r="2"/><circle cx="429" cy="359" r="2"/><circle cx="447" cy="363" r="2"/><circle cx="460" cy="339" r="1.800"/><circle cx="466" cy="342" r="1.800"/><circle cx="470" cy="347" r="1.800"/><circle cx="470" cy="353" r="2"/><circle cx="444" cy="354" r="1.800"/><circle cx="446" cy="358" r="1.800"/>
<circle cx="544" cy="225" r="1.800"/><circle cx="568" cy="213" r="1.800"/><circle cx="592" cy="201" r="1.800"/><circle cx="572" cy="230" r="1.800"/><circle cx="596" cy="218" r="1.800"/><circle cx="619" cy="206" r="1.800"/><circle cx="602" cy="247" r="1.800"/><circle cx="626" cy="235" r="1.800"/><circle cx="650" cy="224" r="1.800"/><circle cx="608" cy="252" r="1.800"/><circle cx="612" cy="256" r="1.800"/><circle cx="613" cy="260" r="1.800"/><circle cx="632" cy="239" r="1.800"/><circle cx="636" cy="243" r="1.800"/><circle cx="636" cy="247" r="1.800"/><circle cx="656" cy="229" r="1.800"/><circle cx="660" cy="233" r="1.800"/><circle cx="661" cy="236" r="1.800"/>
<circle cx="738" cy="145" r="1.800"/><circle cx="760" cy="134" r="1.800"/><circle cx="788" cy="139" r="1.800"/><circle cx="765" cy="151" r="1.800"/><circle cx="800" cy="169" r="1.800"/><circle cx="823" cy="157" r="1.800"/><circle cx="829" cy="162" r="1.800"/><circle cx="832" cy="166" r="1.800"/><circle cx="833" cy="171" r="1.800"/><circle cx="807" cy="172" r="1.800"/><circle cx="809" cy="177" r="1.800"/><circle cx="810" cy="182" r="1.800"/></g>
<path d="M244 361V343" stroke="#3a3ad8" stroke-width="1.200"/><path d="M244 339l-2 5h4z" fill="#3a3ad8"/><path d="M244 361l-14-5" stroke="#29c6c6" stroke-width="1.200"/><path d="M244 361l18-6" stroke="#e03030" stroke-width="1.200"/><path d="M262 355l-4-1 1 3z" fill="#e03030"/><path d="M244 361l-2 6" stroke="#888"/>
<text x="243" y="342" font-size="9" fill="#e8eef2" font-family="Liberation Sans">Z</text><text x="222" y="357" font-size="9" fill="#e8eef2" font-family="Liberation Sans">Y</text><text x="264" y="357" font-size="9" fill="#e8eef2" font-family="Liberation Sans">X</text>
</svg>
<div class="scb d-flex align-items-end"><span>4000</span><i></i></div>
</div></div>
<div class="btb d-flex align-items-center"><i class="grip"></i><svg class="ic"><use href="#b1"/></svg><i class="car"></i><i class="grip"></i><svg class="ic"><use href="#opn"/></svg><svg class="ic"><use href="#opn"/></svg><svg class="ic"><use href="#mf"/></svg><svg class="ic"><use href="#p5"/></svg><svg class="ic"><use href="#r1"/></svg><svg class="ic"><use href="#r2"/></svg><i class="car"></i><i class="sepv"></i><svg class="ic mgl2"><use href="#rx"/></svg><svg class="ic"><use href="#gea"/></svg><svg class="ic"><use href="#mf"/></svg><svg class="ic"><use href="#num"/></svg><i class="grip"></i><svg class="ic"><use href="#str"/></svg><i class="grip"></i>
<div class="dd d-flex align-items-center" style="width:74px"><svg class="ic" style="width:15px"><use href="#top"/></svg><span class="ms-1">By 2D Topo</span><b></b></div><svg class="ic"><use href="#cv"/></svg><i class="car"></i><svg class="ic"><use href="#cw2"/></svg><i class="car"></i><svg class="ic ms-1"><use href="#bx"/></svg><i class="sepv" style="width:7px"></i>
<div class="dd d-flex align-items-center" style="width:80px"><svg class="ic" style="width:15px"><use href="#cbb"/></svg><span class="ms-1">By Comp</span><b></b></div><svg class="ic"><use href="#wc"/></svg><i class="car"></i><svg class="ic"><use href="#sc"/></svg><i class="car"></i><svg class="ic mgl2"><use href="#ln"/></svg><i class="car"></i><svg class="ic"><use href="#dg"/></svg><i class="car"></i><svg class="ic"><use href="#db"/></svg><i class="car"></i><svg class="ic"><use href="#sq4"/></svg><svg class="ic"><use href="#scr"/></svg></div>
</main></div>

<section class="cw">
<div class="cwt d-flex align-items-center justify-content-center">
<div class="dots d-flex"><span class="lg" style="background:#f4605a"></span><span class="lg" style="background:#f6b23c"></span><span class="lg" style="background:#cfd2cc"></span></div>
<svg class="xic" viewBox="0 0 10 10"><rect width="10" height="10" fill="#eee" stroke="#aaa"/><path d="M2 1l6 8M8 1 2 9" stroke="#333" stroke-width="1.200"/></svg><span>Card Image</span></div>
<div class="cwl"></div>
<div class="crow d-flex align-items-center"><button class="btn idb">ID</button><span class="cc" style="margin-left:-1px">[ E ]</span><span class="cc">[ G ]</span><span class="cc">[ NU ]</span><span class="cc">[ RHO ]</span><span class="cc">[ A ]</span><span class="cc">[ TREF ]</span><span class="cc">[ GE ]</span></div>
<div class="crow d-flex align-items-center" style="height:14px"><span class="mt">MAT1</span><span class="text-end" style="width:4px;margin-right:6px">1</span><span class="fld">1.4e+05</span><span style="width:83px"></span><span class="fld gr">0.770</span></div>
<div class="crow d-flex align-items-center" style="padding-left:80px"><span class="cc">[ ST ]</span><span class="cc">[ SC ]</span><span class="cc">[ SS ]</span></div>
<div class="cbot">
<button class="btn upb" aria-label="up"></button><i class="upl"></i>
<span class="brk"></span><span class="uc">User Comments</span>
<div class="hb d-flex"><button class="btn hb1" aria-label="down"></button><button class="btn hb2">Hide In Menu/Export</button></div>
<button class="btn gbtn" style="top:1px">reject</button><button class="btn gbtn" style="top:15px">default</button>
</div>
</section>
<i class="rlin"></i>
</body></html>
